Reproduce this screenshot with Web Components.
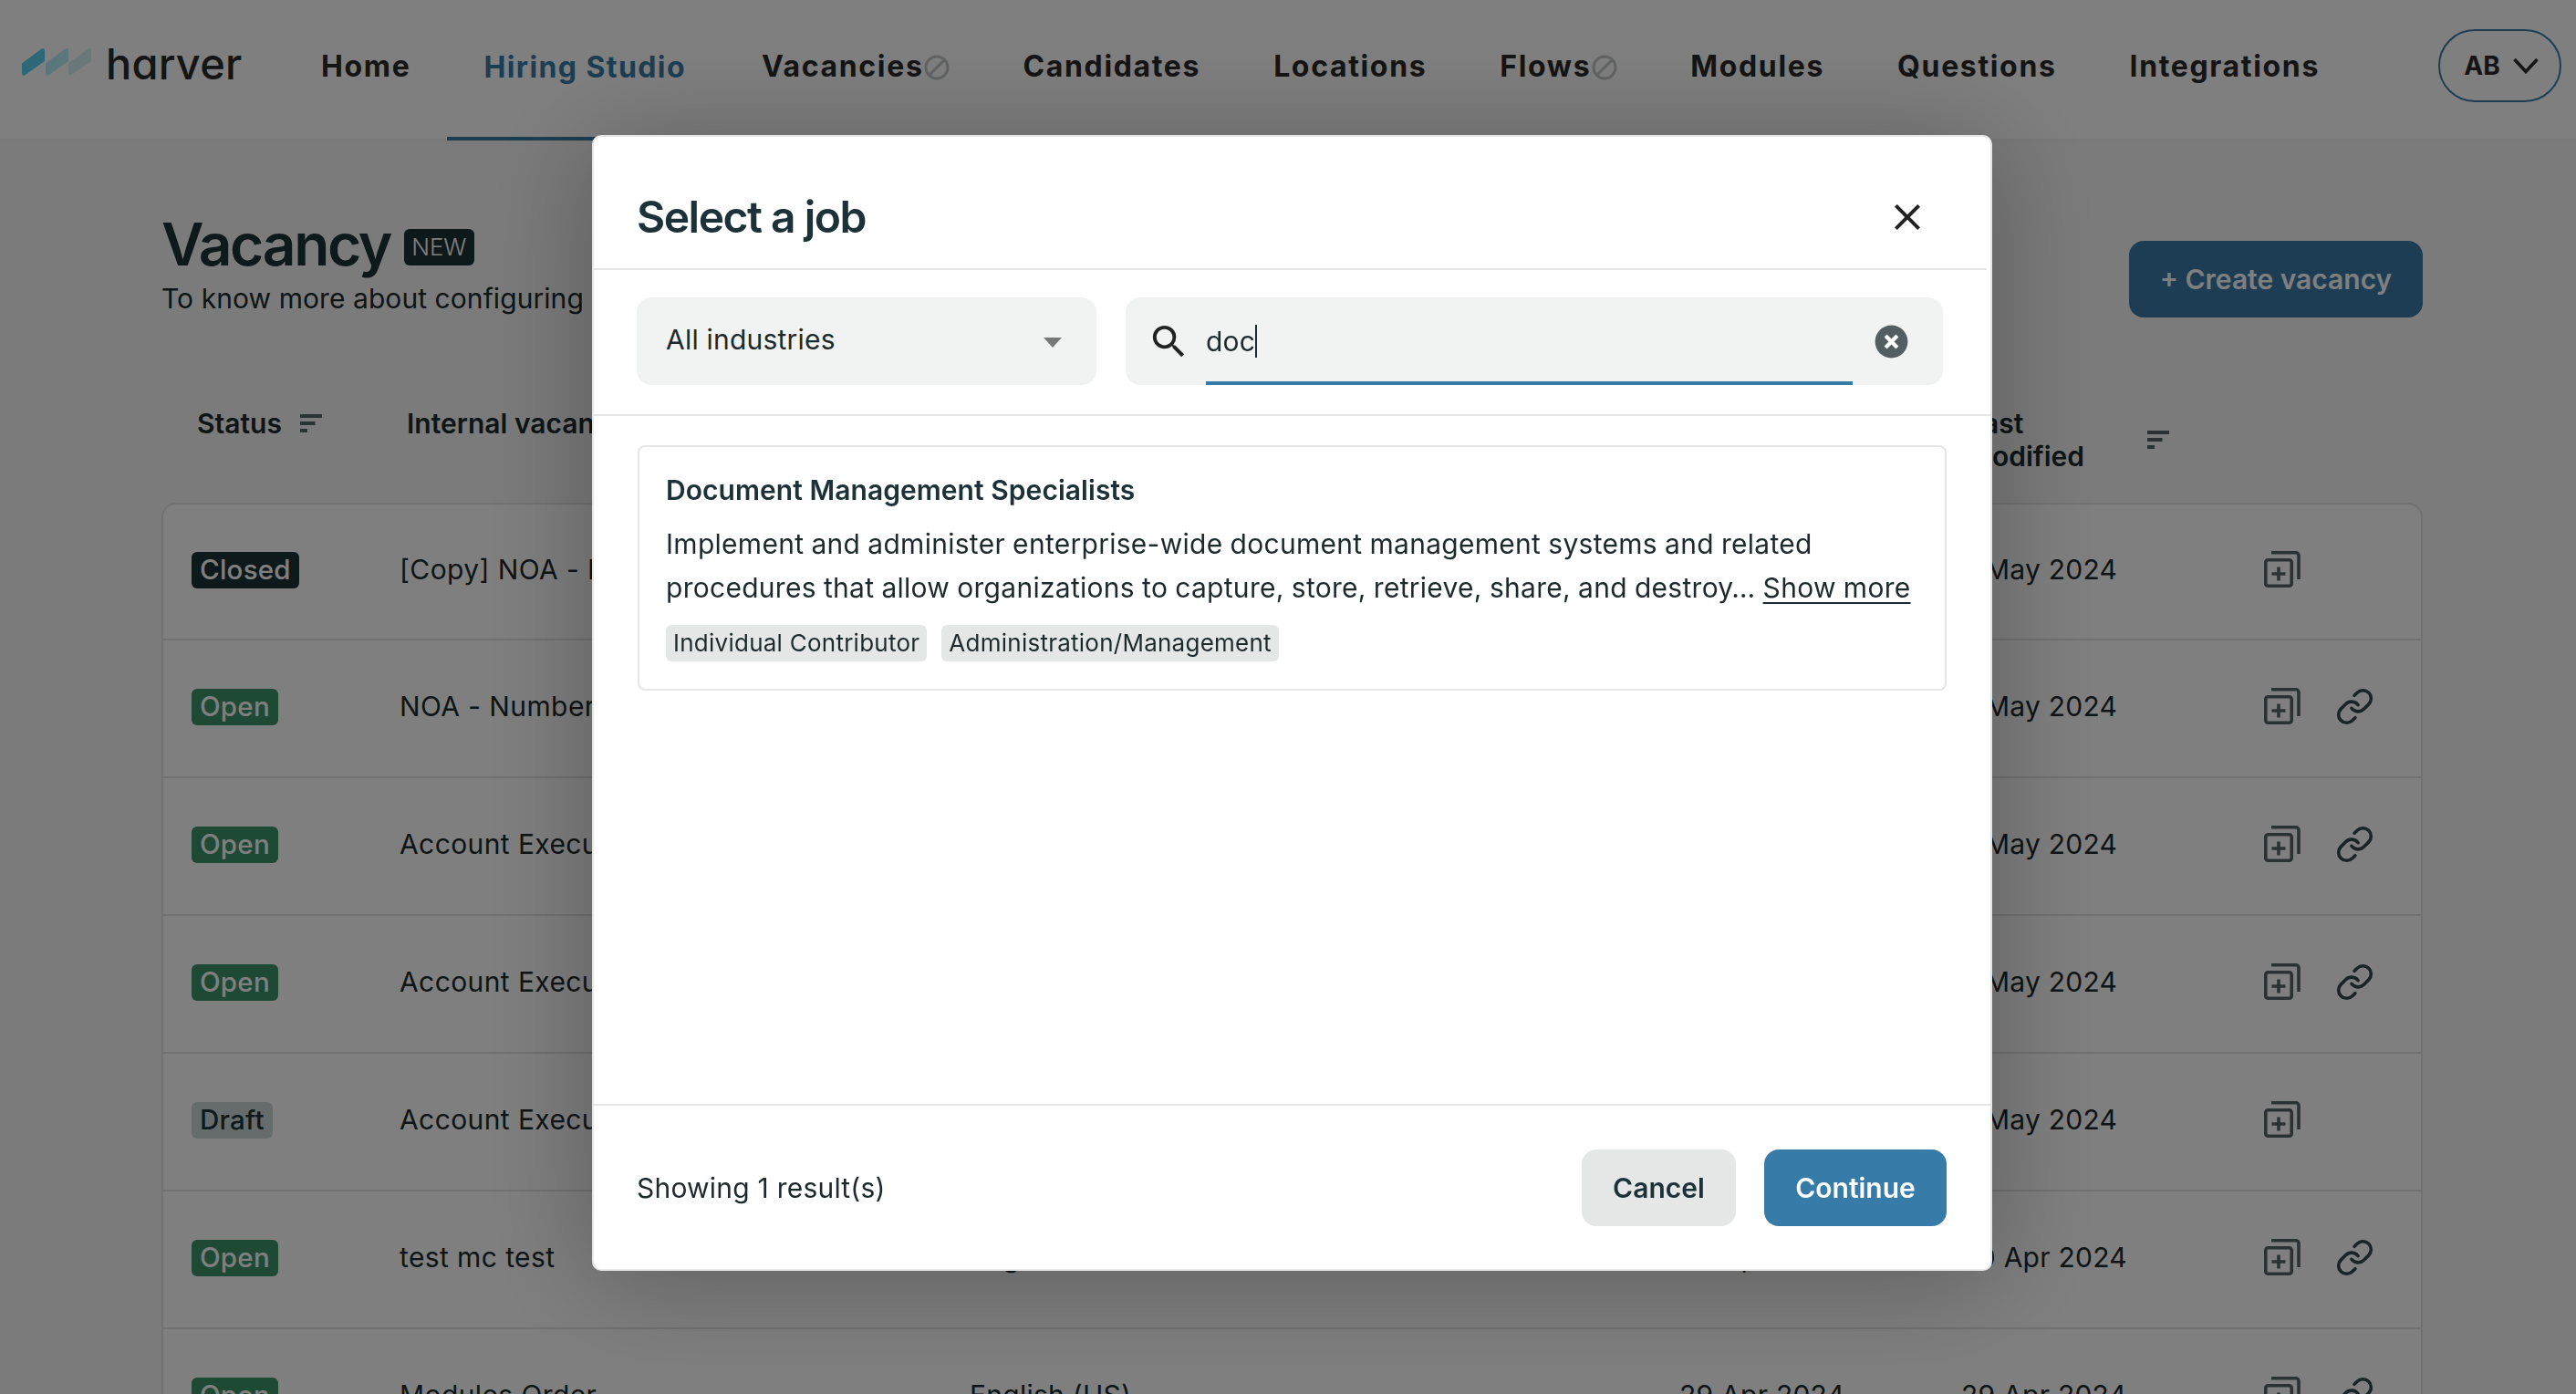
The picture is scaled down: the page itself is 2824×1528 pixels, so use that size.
<!DOCTYPE html>
<html lang="en"><head><meta charset="utf-8"><title>Harver</title>
<style>
html,body{margin:0;height:100%;overflow:hidden}
body{font-family:Inter,"Liberation Sans",sans-serif;color:#1d3238;background:#f7f7f7;width:2824px;height:1528px}
</style></head><body>
<hv-app></hv-app>
<script>
const ICONS={
 sort:'<svg width="24" height="20" viewBox="0 0 24 20" fill="#566466"><rect width="24" height="4"/><rect y="8" width="16.5" height="4"/><rect y="16" width="8" height="4"/></svg>',
 copy:'<svg width="40" height="40" viewBox="0 0 40 40" fill="none" stroke="#566466" stroke-width="3.6"><rect x="1.8" y="9.8" width="28.4" height="28.4" rx="2.5"/><path d="M8 1.8h27a3 3 0 0 1 3 3V31"/><path d="M16 17.5v15M8.5 25h15"/></svg>',
 link:'<svg width="43" height="43" viewBox="0 0 24 24" fill="none" stroke="#35464b" stroke-width="2" stroke-linecap="round" stroke-linejoin="round"><path d="M10 13a5 5 0 0 0 7.54.54l3-3a5 5 0 0 0-7.07-7.07l-1.72 1.71"/><path d="M14 11a5 5 0 0 0-7.54-.54l-3 3a5 5 0 0 0 7.07 7.07l1.71-1.71"/></svg>',
 ban:'<svg width="28" height="28" viewBox="0 0 28 28" fill="none" stroke="#c4c6c6" stroke-width="3"><circle cx="14" cy="14" r="12"/><path d="M5.500 22.500l17-17"/></svg>'
};
function def(name,css,html){
 customElements.define(name,class extends HTMLElement{
  constructor(){super();this.attachShadow({mode:'open'})}
  connectedCallback(){const a=k=>this.getAttribute(k)||'';this.shadowRoot.innerHTML='<style>'+css+'</style>'+(typeof html==='function'?html(a,this):html)}
 });
}
def('hv-nav-item',`
 :host{display:flex;align-items:center;height:152px;padding:0 40px 6px;box-sizing:border-box;font:700 32px/40px Inter,sans-serif;letter-spacing:1.65px;color:#2a2a2a;white-space:nowrap;gap:1px}
 :host([active]){color:#387ba8;border-bottom:4px solid #387ba8;padding:0 43px 2px 40px;height:154px;letter-spacing:1.4px}
 svg{display:block;margin-top:1px}
`,a=>`<slot></slot>${a('ban')?ICONS.ban:''}`);
def('hv-logo',`
 :host{display:flex;align-items:center;gap:15px;width:312px;padding-left:24px;box-sizing:border-box;height:152px}
 span{font:500 47px/50px Inter,sans-serif;font-feature-settings:"cv11" 1;color:#2a2a2a;letter-spacing:.2px;margin-top:-12px}
 svg{display:block;margin-top:-16px}
`,`<svg width="77" height="30" viewBox="0 0 77 30"><path d="M0 16.500 21.500.6Q25 -1 25 2.500V14L3 29.500Q0 30.500 0 27Z" style="fill:#5bd0f0"/><path d="M26 16.500 47.500.6Q51 -1 51 2.500V14L29 29.500Q26 30.500 26 27Z" style="fill:#b4eef8"/><path d="M51 16.500 72.500.6Q76 -1 76 2.500V14L54 29.500Q51 30.500 51 27Z" style="fill:#d6f0f5"/></svg><span>harver</span>`);
def('hv-header',`
 :host{display:flex;align-items:flex-start;height:152px;background:#fff;position:relative;box-shadow:0 2px 8px rgba(0,0,0,.04)}
 nav{display:flex}
 .av{position:absolute;left:2673px;top:32px;width:135px;height:80px;box-sizing:border-box;border:2px solid #387ba8;border-radius:40px;display:flex;align-items:center;justify-content:center;gap:14px;padding-left:3px;font:700 28px/32px Inter,sans-serif;color:#2a2a2a}
`,`<hv-logo></hv-logo><nav>
 <hv-nav-item>Home</hv-nav-item><hv-nav-item active>Hiring Studio</hv-nav-item><hv-nav-item ban="1">Vacancies</hv-nav-item><hv-nav-item>Candidates</hv-nav-item><hv-nav-item>Locations</hv-nav-item><hv-nav-item ban="1">Flows</hv-nav-item><hv-nav-item>Modules</hv-nav-item><hv-nav-item>Questions</hv-nav-item><hv-nav-item>Integrations</hv-nav-item>
</nav><div class="av">AB<svg width="28" height="18" viewBox="0 0 28 18" fill="none" stroke="#2a2a2a" stroke-width="3.6"><path d="M1.500 2 14 15.500 26.500 2"/></svg></div>`);
def('hv-badge',`
 :host{display:inline-block;height:40px;box-sizing:border-box;padding:0 9px;border-radius:6px;font:500 29.5px/38px Inter,sans-serif;color:#fff;background:#3c946a}
 :host([kind=closed]){background:#1d3238}
 :host([kind=draft]){background:#ccd8d8;color:#1d3238}
`,'<slot></slot>');
const COLS='grid-template-columns:259px 625px 778px 309px 332px 1fr';
def('hv-row',`
 :host{display:grid;${COLS};align-items:center;height:151px;box-sizing:border-box;padding-bottom:5px;border-bottom:2px solid #e2e2e2;font:400 30px/40px Inter,sans-serif;letter-spacing:.25px;color:#1d2a2d;white-space:nowrap}
 .s{padding-left:31px}
 .nm{letter-spacing:.4px}
 .acts{display:flex;align-items:center;gap:38px}
 .acts svg{display:block}
`,a=>`<div class="s"><hv-badge kind="${a('kind')}">${a('status')}</hv-badge></div><div class="nm">${a('name')}</div><div>${a('lang')}</div><div>${a('created')}</div><div>${a('modified')}</div><div class="acts">${ICONS.copy}${a('link')?ICONS.link:''}</div>`);
def('hv-head-cell',`
 :host{display:flex;align-items:center;gap:20px;font:600 30px/36px Inter,sans-serif;color:#1d2a2d;padding-left:7px}
 span{display:block}
 :host([w]) span{width:177px}
`,'<span><slot></slot></span>'+ICONS.sort);
def('hv-table',`
 :host{display:block}
 .head{display:grid;grid-template-columns:260px 624px 778px 309px 332px 1fr;align-items:start;height:72px;margin:97px 0 33px;padding-left:2px}
 .box{background:#fff;border:2px solid #e2e2e2;border-radius:16px 16px 0 0;border-bottom:0}
 hv-row:first-child{height:149px}
`,`<div class="head"><hv-head-cell style="padding-left:37px">Status</hv-head-cell><hv-head-cell>Internal vacancy</hv-head-cell><div></div><div></div><hv-head-cell w="1">Last modified</hv-head-cell><div></div></div>
<div class="box">
<hv-row kind="closed" status="Closed" name="[Copy] NOA - N" modified="7 May 2024"></hv-row>
<hv-row kind="open" status="Open" name="NOA - Number" modified="7 May 2024" link="1"></hv-row>
<hv-row kind="open" status="Open" name="Account Execu" modified="7 May 2024" link="1"></hv-row>
<hv-row kind="open" status="Open" name="Account Execu" modified="7 May 2024" link="1"></hv-row>
<hv-row kind="draft" status="Draft" name="Account Execu" modified="7 May 2024"></hv-row>
<hv-row kind="open" status="Open" name="test mc test" lang="English (US)" created="30 Apr 2024" modified="30 Apr 2024" link="1"></hv-row>
<hv-row kind="open" status="Open" name="Modules Order" lang="English (US)" created="29 Apr 2024" modified="29 Apr 2024" link="1"></hv-row>
</div>`);
def('hv-page',`
 :host{display:block;padding:80px 168px 0 177px}
 .top{display:flex;justify-content:space-between;align-items:flex-start}
 .t{display:flex;align-items:center;gap:15px;height:72px}
 h1{margin:0;font:600 64px/72px Inter,sans-serif;letter-spacing:-2.3px;color:#1d3238}
 .new{background:#1d3238;color:#fff;font:300 26px/40px Inter,sans-serif;height:40px;padding:0 8px;border-radius:6px;margin-top:6px}
 p{margin:3px 0 0;font:400 30px/40px Inter,sans-serif;letter-spacing:.07px;color:#1d2a2d;white-space:nowrap}
 .btn{margin-top:32px;width:322px;height:84px;border-radius:16px;background:#387ba8;color:#fff;display:flex;align-items:center;justify-content:center;font:600 30px/40px Inter,sans-serif}
`,`<div class="top"><div><div class="t"><h1>Vacancy</h1><span class="new">NEW</span></div><p>To know more about configuring</p><div style="height:2px"></div></div><div class="btn">+ Create vacancy</div></div><hv-table></hv-table>`);
def('hv-select',`
 :host{display:flex;align-items:center;justify-content:space-between;box-sizing:border-box;width:504px;height:96px;padding:0 38px 0 32px;background:#f1f3f3;border-radius:16px;font:400 30px/40px Inter,sans-serif;letter-spacing:.22px;color:#1d2a2d}
 span{margin-top:-4px}
 i{display:block;width:0;height:0;border:10px solid transparent;border-top:11px solid #777;border-bottom:0;margin-top:2px}
`,'<span><slot></slot></span><i></i>');
def('hv-search',`
 :host{display:flex;align-items:center;box-sizing:border-box;width:896px;height:96px;background:#f1f3f3;border-radius:16px;font:400 30px/40px Inter,sans-serif;letter-spacing:.22px;color:#1d2a2d}
 .ic{display:block;margin-left:24px;margin-top:1px}
 .f{width:709px;height:96px;margin-left:17px;box-sizing:border-box;border-bottom:4px solid #377ba8;display:flex;align-items:center;padding-top:4px}
 .c{display:inline-block;width:2px;height:36px;background:#1d2a2d}
 .x{display:block;margin-left:21px}
`,`<svg class="ic" width="47" height="47" viewBox="0 0 24 24" fill="#222"><path d="M15.500 14h-.79l-.28-.27A6.471 6.471 0 0 0 16 9.500 6.500 6.500 0 1 0 9.500 16c1.610 0 3.090-.59 4.230-1.570l.27.28v.79l5 4.990L20.490 19l-4.990-5zm-6 0C7.010 14 5 11.990 5 9.500S7.010 5 9.500 5 14 7.010 14 9.500 11.990 14 9.500 14z"/></svg><div class="f"><span><slot></slot></span><i class="c"></i></div><svg class="x" width="43" height="43" viewBox="0 0 24 24" fill="#525e62"><path d="M12 2C6.470 2 2 6.470 2 12s4.470 10 10 10 10-4.470 10-10S17.530 2 12 2z"/><path d="M8.400 8.400l7.200 7.200M15.600 8.400l-7.200 7.200" stroke="#fff" stroke-width="2.400" fill="none"/></svg>`);
def('hv-job-card',`
 :host{display:block;box-sizing:border-box;width:1435px;height:269px;border:2px solid #e5e7e7;border-radius:8px;padding:23px 30px 0 29px;color:#1d2a2d}
 h3{margin:0;font:600 30px/48px Inter,sans-serif;letter-spacing:.05px;color:#1d3238}
 p{margin:11px 0 0;font:400 30px/48px Inter,sans-serif;letter-spacing:.28px;word-spacing:-.6px}
 u{text-underline-offset:5px;text-decoration-thickness:2px}
 .tags{display:flex;gap:16px;margin-top:17px}
 .tag{height:40px;padding:0 8px;background:#e5e7e7;border-radius:6px;font:400 26px/40px Inter,sans-serif;letter-spacing:.25px}
`,`<h3>Document Management Specialists</h3><p>Implement and administer enterprise-wide document management systems and related procedures that allow organizations to capture, store, retrieve, share, and destroy… <u>Show more</u></p><div class="tags"><span class="tag">Individual Contributor</span><span class="tag">Administration/Management</span></div>`);
def('hv-button',`
 :host{display:flex;align-items:center;justify-content:center;height:84px;box-sizing:border-box;border-radius:16px;font:600 30px/40px Inter,sans-serif;background:#e5e7e7;color:#1d3238}
 :host([primary]){background:#377ba8;color:#fff}
`,'<slot></slot>');
def('hv-modal',`
 :host{display:flex;flex-direction:column;box-sizing:border-box;width:1535px;height:1245px;background:#fff;border:2px solid #e5e7e7;border-radius:10px;box-shadow:0 10px 120px rgba(0,0,0,.28)}
 header{display:flex;align-items:flex-end;justify-content:space-between;height:144px;padding:0 64px 0 47px;border-bottom:2px solid #e5e7e7;margin-right:4px;box-sizing:content-box}
 h2{margin:0 0 32px;font:600 48px/48px Inter,sans-serif;letter-spacing:-1.5px;color:#1d3238}
 header svg{display:block;margin-bottom:32px;margin-right:-1px}
 .filters{display:flex;gap:32px;padding:30px 0 32px 47px;border-bottom:2px solid #e5e7e7}
 .body{flex:1;padding:32px 0 0 48px}
 footer{display:flex;align-items:flex-start;justify-content:space-between;height:181px;box-sizing:border-box;border-top:2px solid #e5e7e7;padding:48px 48px 0 47px}
 .n{font:400 30px/84px Inter,sans-serif;letter-spacing:.22px;color:#1d2a2d}
 .b{display:flex;gap:31px}
`,`<header><h2>Select a job</h2><svg width="48" height="48" viewBox="0 0 24 24" fill="#222"><path d="M19 6.410L17.590 5 12 10.590 6.410 5 5 6.410 10.590 12 5 17.590 6.410 19 12 13.410 17.590 19 19 17.590 13.410 12z"/></svg></header>
<div class="filters"><hv-select>All industries</hv-select><hv-search>doc</hv-search></div>
<div class="body"><hv-job-card></hv-job-card></div>
<footer><div class="n">Showing 1 result(s)</div><div class="b"><hv-button style="width:169px">Cancel</hv-button><hv-button primary style="width:200px">Continue</hv-button></div></footer>`);
def('hv-overlay',`
 :host{position:fixed;inset:0;background:rgba(0,0,0,.5);padding:148px 0 0 649px;box-sizing:border-box;display:block}
`,'<slot></slot>');
def('hv-app',`:host{display:block;height:1528px;overflow:hidden}`,`<hv-header></hv-header><hv-page></hv-page><hv-overlay><hv-modal></hv-modal></hv-overlay>`);
</script>
</body></html>
